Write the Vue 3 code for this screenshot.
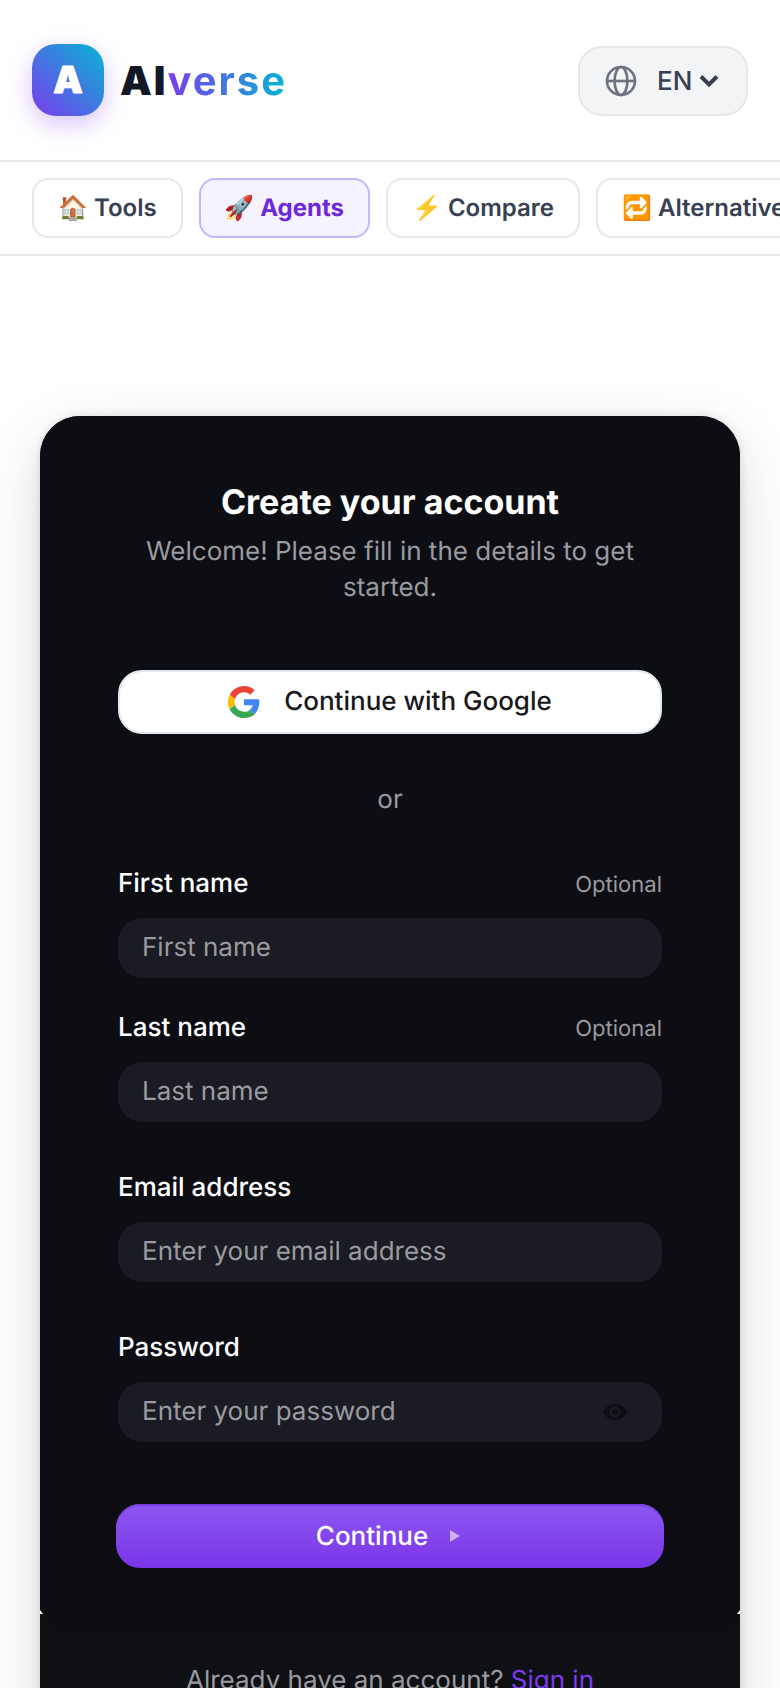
<script setup>
const tabs = [
  { icon: "🏠", label: "Tools" },
  { icon: "🚀", label: "Agents", active: true },
  { icon: "⚡", label: "Compare" },
  { icon: "🔁", label: "Alternatives" },
];
</script>

<template>
  <div class="page">
    <header class="topbar">
      <div class="brand">
        <div class="logo">A</div>
        <div class="wordmark">AI<span>verse</span></div>
      </div>
      <button class="lang">
        <svg class="globe" viewBox="0 0 24 24" fill="none" stroke="currentColor" stroke-width="2">
          <circle cx="12" cy="12" r="10.5" />
          <path d="M1.5 12h21" />
          <ellipse cx="12" cy="12" rx="4.8" ry="10.5" />
        </svg>
        <span class="lang-code">EN</span>
        <svg class="chevron" viewBox="0 0 20 14" fill="none" stroke="currentColor" stroke-width="4">
          <path d="M2 2.5l8 8 8-8" />
        </svg>
      </button>
    </header>

    <nav class="tabs">
      <a v-for="tab in tabs" :key="tab.label" class="tab" :class="{ active: tab.active }">{{ tab.icon }} {{ tab.label }}</a>
    </nav>

    <main class="content">
      <section class="card">
        <div class="card-main">
          <h1>Create your account</h1>
          <p class="sub">Welcome! Please fill in the details to get started.</p>

          <button class="google">
            <svg class="g-icon" viewBox="0 0 48 48">
              <path fill="#EA4335" d="M24 9.5c3.54 0 6.71 1.22 9.21 3.6l6.85-6.85C35.9 2.38 30.47 0 24 0 14.62 0 6.51 5.38 2.56 13.22l7.98 6.19C12.43 13.72 17.74 9.5 24 9.5z" />
              <path fill="#4285F4" d="M46.98 24.55c0-1.57-.15-3.09-.38-4.55H24v9.02h12.94c-.58 2.96-2.26 5.48-4.78 7.18l7.73 6c4.51-4.18 7.09-10.36 7.09-17.65z" />
              <path fill="#FBBC05" d="M10.53 28.59c-.48-1.45-.76-2.99-.76-4.59s.27-3.14.76-4.59l-7.98-6.19C.92 16.46 0 20.12 0 24c0 3.88.92 7.54 2.56 10.78l7.97-6.19z" />
              <path fill="#34A853" d="M24 48c6.48 0 11.93-2.13 15.89-5.81l-7.73-6c-2.15 1.45-4.92 2.3-8.16 2.3-6.26 0-11.57-4.22-13.47-9.91l-7.98 6.19C6.51 42.62 14.62 48 24 48z" />
            </svg>
            Continue with Google
          </button>

          <div class="or">or</div>

          <div class="names">
            <div class="field">
              <div class="label-row"><label>First name</label><span class="optional">Optional</span></div>
              <input type="text" placeholder="First name" />
            </div>
            <div class="field">
              <div class="label-row"><label>Last name</label><span class="optional">Optional</span></div>
              <input type="text" placeholder="Last name" />
            </div>
          </div>

          <div class="field email">
            <div class="label-row"><label>Email address</label></div>
            <input type="email" placeholder="Enter your email address" />
          </div>

          <div class="field password">
            <div class="label-row"><label>Password</label></div>
            <div class="input-wrap">
              <input type="password" placeholder="Enter your password" />
              <svg class="eye" viewBox="0 0 24 24">
                <path fill="currentColor" d="M12 4.5C7 4.5 2.73 7.61 1 12c1.73 4.39 6 7.5 11 7.5s9.27-3.11 11-7.5c-1.73-4.39-6-7.5-11-7.5zM12 17c-2.76 0-5-2.24-5-5s2.24-5 5-5 5 2.24 5 5-2.24 5-5 5zm0-8c-1.66 0-3 1.34-3 3s1.34 3 3 3 3-1.34 3-3-1.34-3-3-3z" />
              </svg>
            </div>
          </div>

          <button class="submit">
            Continue
            <svg class="arrow" viewBox="0 0 10 12"><path fill="currentColor" d="M0 0v12l10-6z" /></svg>
          </button>
        </div>
        <div class="card-foot">Already have an account? <a>Sign in</a></div>
      </section>
    </main>
  </div>
</template>

<style>
html,
body {
  margin: 0;
  background: #fff;
}
</style>

<style scoped>
.page {
  width: 780px;
  height: 1688px;
  overflow: hidden;
  font-family: Inter, "Noto Sans", sans-serif;
  text-rendering: geometricPrecision;
  background: #fff;
}

.topbar {
  height: 160px;
  padding: 0 32px;
  display: flex;
  align-items: center;
  justify-content: space-between;
  border-bottom: 2px solid #e5e7eb;
}

.brand {
  display: flex;
  align-items: center;
  gap: 16px;
}

.logo {
  width: 72px;
  height: 72px;
  box-sizing: border-box;
  padding-bottom: 2px;
  border-radius: 24px;
  background: linear-gradient(45deg, #7c3aed, #06b6d4);
  box-shadow: 0 8px 24px rgba(124, 58, 237, 0.3);
  color: #fff;
  font-size: 37px;
  font-weight: 900;
  -webkit-text-stroke: 1px #fff;
  display: flex;
  align-items: center;
  justify-content: center;
}

.wordmark {
  font-size: 40px;
  font-weight: 900;
  letter-spacing: 2px;
  color: #111827;
}

.wordmark span {
  background: linear-gradient(90deg, #7c3aed, #06b6d4);
  -webkit-background-clip: text;
  background-clip: text;
  color: transparent;
  font-weight: 700;
}

.lang {
  width: 170px;
  height: 70px;
  margin-top: 2px;
  box-sizing: border-box;
  border: 2px solid #e5e7eb;
  border-radius: 24px;
  background: #f3f4f6;
  color: #374151;
  display: flex;
  align-items: center;
  padding: 0 0 0 25px;
  font-family: inherit;
  text-rendering: inherit;
}

.globe {
  width: 32px;
  height: 32px;
  color: #6b7280;
}

.lang-code {
  font-size: 26px;
  font-weight: 500;
  margin-left: 20px;
}

.chevron {
  width: 20px;
  height: 14px;
  margin-left: 7px;
}

.tabs {
  display: flex;
  gap: 16px;
  padding: 16px 32px;
  border-bottom: 2px solid #e5e7eb;
  overflow: hidden;
}

.tab {
  flex: none;
  height: 60px;
  box-sizing: border-box;
  padding: 0 24px;
  border: 2px solid #e5e7eb;
  border-radius: 16px;
  line-height: 56px;
  font-size: 24px;
  font-weight: 600;
  color: #374151;
  background: #fff;
  white-space: nowrap;
}

.tab.active {
  background: #f5f3ff;
  border-color: #c4b5fd;
  color: #6d28d9;
  font-weight: 700;
}

.content {
  padding: 160px 40px 0;
}

.card {
  border-radius: 40px;
  background: #0e1014;
  box-shadow: 0 20px 60px rgba(0, 0, 0, 0.15), 0 0 8px rgba(0, 0, 0, 0.12);
  overflow: hidden;
}

.card-main {
  position: relative;
  background: #0d0e14;
  border-radius: 0 0 40px 40px;
  padding: 65px 78px 64px;
  height: 1217px;
  box-sizing: border-box;
  box-shadow: 0 2px 6px rgba(0, 0, 0, 0.2);
}

.card-main::before,
.card-main::after {
  content: "";
  position: absolute;
  top: 1194px;
  width: 3px;
  height: 4px;
  background: #fff;
}

.card-main::before {
  left: 0;
  clip-path: polygon(0 0, 100% 100%, 0 100%);
}

.card-main::after {
  right: 0;
  clip-path: polygon(100% 0, 100% 100%, 0 100%);
}

h1 {
  margin: 0;
  text-align: center;
  font-size: 34px;
  line-height: 44px;
  font-weight: 700;
  color: #fff;
}

.sub {
  margin: 9px 0 0;
  text-align: center;
  font-size: 26px;
  line-height: 36px;
  color: #9a9a9f;
}

.google {
  margin-top: 64px;
  width: 100%;
  height: 64px;
  box-sizing: border-box;
  padding-bottom: 2px;
  border: 2px solid #e2e8f0;
  border-radius: 24px;
  background: #fff;
  color: #18181b;
  font-family: inherit;
  text-rendering: inherit;
  font-size: 26px;
  font-weight: 500;
  display: flex;
  align-items: center;
  justify-content: center;
  gap: 24px;
}

.g-icon {
  width: 32px;
  height: 32px;
}

.or {
  margin-top: 49px;
  text-align: center;
  font-size: 26px;
  line-height: 34px;
  color: #9a9a9f;
}

.names {
  margin-top: 47px;
  display: flex;
  flex-direction: column;
  gap: 30px;
}

.label-row {
  display: flex;
  align-items: center;
  justify-content: space-between;
  height: 34px;
  padding-top: 2px;
  margin-bottom: 18px;
}

label {
  font-size: 26px;
  font-weight: 500;
  color: #fff;
}

.optional {
  padding-top: 4px;
  font-size: 22px;
  color: #9a9a9f;
}

input {
  display: block;
  width: 100%;
  height: 60px;
  box-sizing: border-box;
  padding: 0 24px 2px;
  border: 0;
  outline: 0;
  border-radius: 24px;
  background: #1b1c23;
  box-shadow: 0 0 2px rgba(0, 0, 0, 0.4);
  color: #fff;
  font-family: inherit;
  text-rendering: inherit;
  font-size: 26px;
}

input::placeholder {
  color: #9a9a9f;
}

.email,
.password {
  margin-top: 46px;
}

.input-wrap {
  position: relative;
}

.eye {
  position: absolute;
  right: 34px;
  top: 17px;
  width: 26px;
  height: 26px;
  color: #0d0e14;
}

.submit {
  margin: 62px -2px 0;
  width: calc(100% + 4px);
  height: 64px;
  padding: 0 4px 0 0;
  border: 0;
  border-radius: 24px;
  background: linear-gradient(180deg, #8c57f0, #7a35e8);
  box-shadow: inset 0 2px 0 #7c3fe6, 0 4px 12px rgba(0, 0, 0, 0.2);
  color: #fff;
  font-family: inherit;
  text-rendering: inherit;
  font-size: 26px;
  font-weight: 500;
  display: flex;
  align-items: center;
  justify-content: center;
  gap: 22px;
}

.arrow {
  width: 10px;
  height: 12px;
  flex: none;
  color: #cdb0f7;
}

.card-foot {
  padding: 30px 0 60px;
  text-align: center;
  font-size: 26px;
  line-height: 36px;
  color: #9a9a9f;
}

.card-foot a {
  color: #7c3aed;
}
</style>
